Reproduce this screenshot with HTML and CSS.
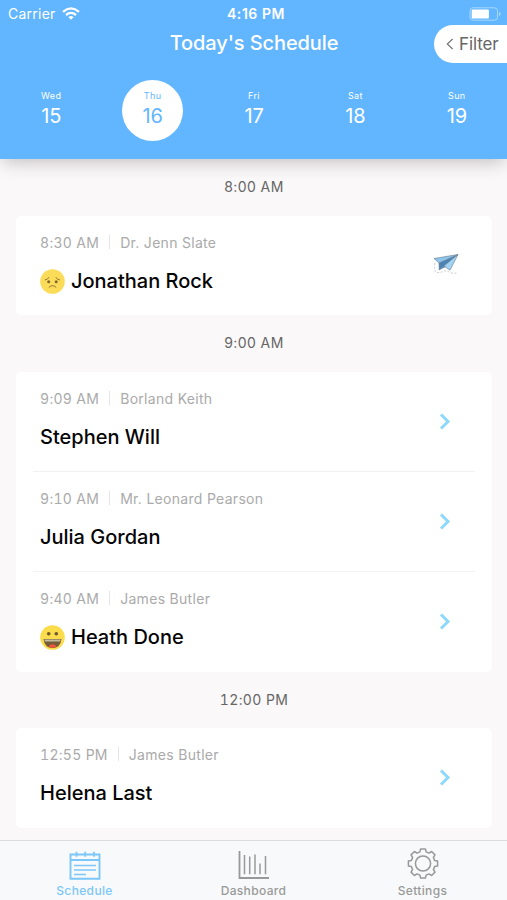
FILE: index.html
```html
<!DOCTYPE html>
<html lang="en">
<head>
<meta charset="utf-8">
<title>Today's Schedule</title>
<link rel="stylesheet" href="styles.css">
</head>
<body>
<div class="app">
  <header class="header">
    <div class="status">
      <div class="carrier"><span>Carrier</span>
        <svg width="18" height="13" viewBox="0 0 18 13" fill="none" stroke="#fff" stroke-width="2.3"><path d="M1 4.8Q9-2 17 4.8M4 8Q9 3.8 14 8"/><path d="M6.4 10.2Q9 8 11.6 10.2L9 12.8Z" fill="#fff" stroke="none"/></svg>
      </div>
      <div class="clock">4:16 PM</div>
      <svg class="battery" width="33" height="14" viewBox="0 0 33 14"><rect x="1" y=".8" width="27.5" height="12.4" rx="3" fill="none" stroke="#a9d8ff" stroke-width="1"/><rect x="2.7" y="2.4" width="17.2" height="9.2" rx="1.2" fill="#fff"/><path d="M30 5v4q1.7-.5 1.7-2T30 5" fill="#a9d8ff"/></svg>
    </div>
    <div class="titlebar">
      <h1>Today's Schedule</h1>
      <button class="filter"><svg width="8" height="12" viewBox="0 0 8 12" fill="none" stroke="#777" stroke-width="1.2"><path d="M6.6 1L1.3 6l5.3 5"/></svg><span>Filter</span></button>
    </div>
    <nav class="days">
      <div class="day"><small>Wed</small><b>15</b></div>
      <div class="day selected"><small>Thu</small><b>16</b></div>
      <div class="day"><small>Fri</small><b>17</b></div>
      <div class="day"><small>Sat</small><b>18</b></div>
      <div class="day"><small>Sun</small><b>19</b></div>
    </nav>
  </header>
  <main class="list">
    <h2>8:00 AM</h2>
    <section class="card single">
      <article class="row">
        <div><p class="meta"><time>8:30 AM</time><i></i><span>Dr. Jenn Slate</span></p>
          <p class="name"><svg class="face" viewBox="0 0 25 25"><circle cx="12.5" cy="12.5" r="12.3" fill="#fbdc58"/><g fill="#806634"><circle cx="8.7" cy="12.8" r="1.5"/><circle cx="16.2" cy="12.8" r="1.5"/></g><path d="M4.8 11Q7.8 10.7 9 8.2M15.8 8.2Q17 10.7 20 11M8.8 18.4Q12.5 15 16.2 18.4" fill="none" stroke="#927438" stroke-width="1"/></svg><span>Jonathan Rock</span></p></div>
        <svg class="plane" width="28" height="24" viewBox="0 0 28 24"><path d="M2 5.5L26 1.5 7 10Z" fill="#8fc5ec"/><path d="M7 10L26 1.5 7.2 17Z" fill="#4b84b4"/><path d="M12 13L26 1.5 18 17.2Z" fill="#a2d3f5"/><path d="M7.2 17l4.8-4 1.8 1.1Z" fill="#608eb5"/><path d="M2 5.5L26 1.5 18 17.2 12 13l-4.8 4L7 10ZM7 10L26 1.5 12 13" fill="none" stroke="#64798a" stroke-width=".6"/><path d="M3 10Q1.500 17 4 19.500Q8 20 11 18.500T17 19t8 .8" fill="none" stroke="#b5b5b5" stroke-width=".7" stroke-dasharray="2 1.600"/></svg>
      </article>
    </section>
    <h2>9:00 AM</h2>
    <section class="card">
      <article class="row">
        <div><p class="meta"><time>9:09 AM</time><i></i><span>Borland Keith</span></p><p class="name"><span>Stephen Will</span></p></div>
        <svg class="chev" viewBox="0 0 12 17"><path d="M2 1.500l7 7-7 7"/></svg>
      </article>
      <article class="row">
        <div><p class="meta"><time>9:10 AM</time><i></i><span>Mr. Leonard Pearson</span></p><p class="name"><span>Julia Gordan</span></p></div>
        <svg class="chev" viewBox="0 0 12 17"><path d="M2 1.500l7 7-7 7"/></svg>
      </article>
      <article class="row">
        <div><p class="meta"><time>9:40 AM</time><i></i><span>James Butler</span></p>
          <p class="name"><svg class="face" viewBox="0 0 25 25"><circle cx="12.500" cy="12.500" r="12.300" fill="#fbdc4d"/><circle cx="8.700" cy="8.700" r="1.800" fill="#71572e"/><circle cx="16.300" cy="8.700" r="1.800" fill="#71572e"/><path d="M3.500 14h18q-1.200 9-9 9t-9-9" fill="#765c38"/><path d="M4.200 14.400h16.600l-.8 2H5Z" fill="#c5bd9d"/><path d="M8.300 21.500q4.200-4.500 8.400 0Q12.500 24.200 8.300 21.500" fill="#f0553f"/></svg><span>Heath Done</span></p></div>
        <svg class="chev" viewBox="0 0 12 17"><path d="M2 1.500l7 7-7 7"/></svg>
      </article>
    </section>
    <h2 class="noon">12:00 PM</h2>
    <section class="card">
      <article class="row">
        <div><p class="meta"><time>12:55 PM</time><i></i><span>James Butler</span></p><p class="name"><span>Helena Last</span></p></div>
        <svg class="chev" viewBox="0 0 12 17"><path d="M2 1.500l7 7-7 7"/></svg>
      </article>
    </section>
  </main>
  <footer class="tabs">
    <div class="tab active"><svg viewBox="0 0 32 32"><path d="M1.500 4.500h29v24.300h-29ZM1.500 10h29" stroke-width="1.900"/><path d="M7.500 1.800v5M16.200 1.800v5M25 1.800v5M5 15.500h22M5 20h22M5 24.500h12" stroke-width="1.700"/></svg><span>Schedule</span></div>
    <div class="tab"><svg viewBox="0 0 32 32"><path d="M1.500 1v27H31" stroke-width="1.800"/><path d="M6.500 5v19.200M11.700 6.500v17.700M17 4.500v19.700M22 13.500v10.700M27.500 6v18.200"/></svg><span>Dashboard</span></div>
    <div class="tab"><svg viewBox="0 0 32 32"><g transform="translate(16 13.500)" stroke-linejoin="round"><path d="M-3.100-11.600L-2.400-14.600H2.400L3.100-11.600L6-10.400L8.600-12L12-8.600L10.400-6L11.600-3.100L14.600-2.400V2.400L11.600 3.100L10.400 6L12 8.600L8.600 12L6 10.400L3.100 11.600L2.400 14.600H-2.400L-3.100 11.600L-6 10.400L-8.600 12L-12 8.600L-10.400 6L-11.600 3.100L-14.600 2.400V-2.400L-11.600-3.100L-10.400-6L-12-8.600L-8.600-12L-6-10.400Z"/><circle r="7.600"/></g></svg><span>Settings</span></div>
  </footer>
</div>
</body>
</html>
```

FILE: styles.css
```css
* { box-sizing: border-box; }
body { margin: 0; font-family: Inter, "Liberation Sans", sans-serif; background: #faf8f9; }
h1, h2, p { margin: 0; font-weight: 400; }
svg { display: block; flex: none; overflow: visible; }
.app { height: 900px; display: flex; flex-direction: column; overflow: hidden; }
.header { height: 159px; flex: none; background: #62b6ff; color: #fff; box-shadow: 0 5px 17px -3px rgba(60, 50, 50, .32); }
.status { height: 27px; display: grid; grid-template-columns: 1fr auto 1fr; align-items: center; padding: 0 5px 0 8px; }
.carrier { display: flex; align-items: center; gap: 6px; font-size: 14px; letter-spacing: .25px; }
.clock { font-size: 14px; font-weight: 600; letter-spacing: .55px; padding-left: 2px; }
.battery { justify-self: end; }
.titlebar { height: 38px; display: grid; grid-template-columns: 1fr auto 1fr; margin-top: -2px; }
h1 { grid-column: 2; font-size: 20px; font-weight: 500; letter-spacing: -.1px; line-height: 36px; padding-left: 1px; }
.filter { justify-self: end; width: 73px; height: 38px; border: 0; border-radius: 19px 0 0 19px; background: #fff; color: #666; font: 17px/38px Inter, sans-serif; letter-spacing: -.1px; padding: 0 0 0 12px; display: flex; align-items: center; gap: 5px; }
.days { display: grid; grid-template-columns: repeat(5, 1fr); justify-items: center; margin-top: 17px; }
.day { width: 61px; height: 61px; border-radius: 50%; display: flex; flex-direction: column; align-items: center; padding-top: 10px; }
.day small { font-size: 9px; line-height: 12px; letter-spacing: .35px; padding-left: 1px; }
.day b { font-weight: 400; font-size: 20px; line-height: 28px; letter-spacing: -.2px; padding-left: 1px; }
.selected { background: #fff; color: #62b6ff; }
.list { flex: 1; padding: 0 15px 0 16px; }
h2 { height: 57px; line-height: 56px; text-align: center; font-size: 14px; letter-spacing: .4px; color: #666; }
.noon { height: 56px; font-variant-numeric: tabular-nums; }
.card { background: #fff; border-radius: 5px; }
.row { height: 100px; display: flex; justify-content: space-between; padding: 16px 41px 0 24px; background: linear-gradient(#f3f2f3, #f3f2f3) center bottom / calc(100% - 34px) 1px no-repeat; }
.row:last-child { background: none; }
.single .row { height: 99px; padding-right: 32px; }
.meta { display: flex; align-items: center; height: 20px; font-size: 14px; letter-spacing: .3px; color: #aaa; }
.meta time { font-variant-numeric: tabular-nums; }
.meta i { width: 1px; height: 14px; background: #e5e5e5; margin: 0 10px; }
.name { display: flex; align-items: center; height: 26px; margin-top: 16px; gap: 6px; font-size: 20px; font-weight: 500; color: #050505; }
.face { width: 25px; height: 25px; }
.chev { width: 12px; height: 17px; margin-top: 25px; fill: none; stroke: #8ed8fc; stroke-width: 3; }
.plane { margin-top: 21px; }
.tabs { height: 60px; flex: none; background: #f7f9fa; border-top: 1px solid #dcdcdd; display: grid; grid-template-columns: repeat(3, 1fr); }
.tab { display: flex; flex-direction: column; align-items: center; padding-top: 9px; color: #999; font-size: 12px; font-weight: 500; line-height: 16px; letter-spacing: .35px; }
.tab svg { width: 32px; height: 32px; margin-bottom: 1px; fill: none; stroke: currentColor; stroke-width: 1.5; }
.active { color: #7cc7f8; }
```
